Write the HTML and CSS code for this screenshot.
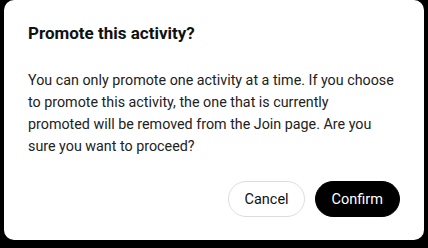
FILE: index.html
```html
<!DOCTYPE html>
<html>
<head>
<meta charset="utf-8">
<link rel="stylesheet" href="styles.css">
</head>
<body>
<div class="dialog">
  <h2 class="title">Promote this activity?</h2>
  <p class="message">You can only promote one activity at a time. If you choose to promote this activity, the one that is currently<br>promoted will be removed from the Join page. Are you sure you want to proceed?</p>
  <div class="actions">
    <button class="btn btn-cancel">Cancel</button>
    <button class="btn btn-confirm">Confirm</button>
  </div>
</div>
</body>
</html>
```
FILE: styles.css
```css
html, body {
  margin: 0;
  padding: 0;
  background: #000;
}
body {
  width: 428px;
  height: 248px;
  overflow: hidden;
  font-family: "Roboto", "Noto Sans", sans-serif;
}
.dialog {
  box-sizing: border-box;
  margin: 0 4px;
  width: 420px;
  height: 240px;
  background: #fff;
  border-radius: 10px;
  padding: 21px 24px 23px;
  display: flex;
  flex-direction: column;
}
.title {
  margin: 0;
  font-size: 17px;
  line-height: 24px;
  font-weight: 700;
  color: #111;
}
.message {
  margin: 24px 0 0;
  font-size: 14.3px;
  line-height: 22px;
  color: #222;
}
.actions {
  margin-top: auto;
  display: flex;
  justify-content: flex-end;
  gap: 10px;
}
.btn {
  font-family: inherit;
  font-size: 14.5px;
  height: 36px;
  border-radius: 18px;
  padding: 0 15px;
  cursor: pointer;
}
.btn-cancel {
  background: #fff;
  color: #111;
  border: 1px solid #ddd;
}
.btn-confirm {
  background: #000;
  color: #fff;
  border: 1px solid #000;
  padding: 0 16px;
}
```
